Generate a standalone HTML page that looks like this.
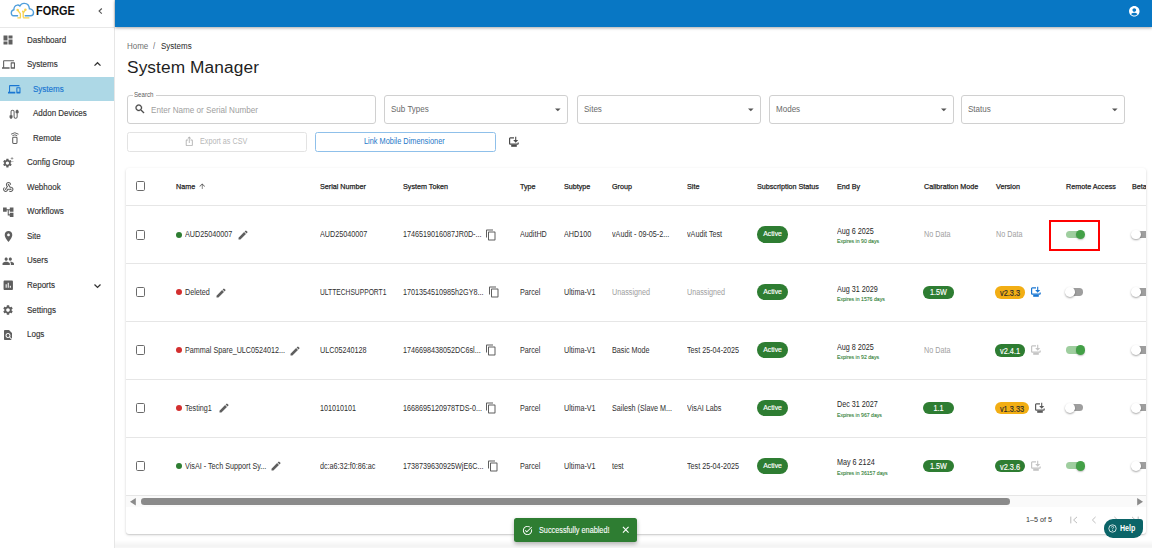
<!DOCTYPE html>
<html><head><meta charset="utf-8">
<style>
*{margin:0;padding:0;box-sizing:border-box}
html,body{width:1152px;height:548px;overflow:hidden;background:#fff;font-family:"Liberation Sans",sans-serif;position:relative}
.a{position:absolute}
.t{position:absolute;white-space:nowrap;line-height:1}
svg{position:absolute;overflow:visible}
/* sidebar */
#side{left:0;top:0;width:115px;height:548px;border-right:1px solid #e6e6e6;background:#fff}
.sn{font-size:9.2px;color:#333;left:27px;transform:scaleX(.87);transform-origin:0 0;-webkit-text-stroke-width:0.15px}
.ss{left:33px}
.ic{fill:#5f5f5f}
/* top bar */
#top{left:115px;top:0;width:1037px;height:27px;background:#0877c4;box-shadow:0 1px 3px rgba(0,0,0,.35)}
</style></head><body>

<!-- SIDEBAR -->
<div id="side" class="a">
  <div class="a" style="left:0;top:27px;width:114px;height:1px;background:#e8e8e8"></div>
  <!-- logo -->
  <svg style="left:0;top:0" width="40" height="22" viewBox="0 0 40 22">
    <path d="M18.1 15.8 H13.5 C12 15.8 11.2 14.2 11.3 12.8 C11.4 11.3 12.4 10 13.9 9.7 C13.8 7.6 15.2 5.4 17.2 5.1 C18.3 4.9 19.3 5.4 19.9 6 C20.8 4.3 22.5 3.3 24.3 3.4 C27.2 3.5 29.2 5.8 29.4 8.8 C31.6 8.9 33.5 10.6 33.5 12.7 C33.5 14.5 32.3 15.8 30.6 15.8 H24.7" fill="none" stroke="#4f9edb" stroke-width="1.4"/>
    <path d="M20.4 17.6 V13.8 L17.7 10.1 M23.2 17.6 V12.6 L22.8 11.4 M23.2 13.2 L25.4 10 M17.4 17.8 H20.9 M23.2 17.9 H29.4" fill="none" stroke="#f6d24d" stroke-width="1.3"/>
    <circle cx="17.6" cy="9.9" r="1.25" fill="#f6d24d"/><circle cx="25.4" cy="9.8" r="1.25" fill="#f6d24d"/><circle cx="22.8" cy="11.3" r="0.9" fill="#f6d24d"/>
  </svg>
  <div class="t" style="left:36px;top:5.1px;font-size:12.7px;font-weight:bold;color:#111;transform:scaleX(.86);transform-origin:0 0">FORGE</div>
  <svg style="left:97px;top:7px" width="7" height="8" viewBox="0 0 7 8"><path d="M4.8 1.5 L2.1 4.1 L4.8 6.7" fill="none" stroke="#555" stroke-width="1.15"/></svg>

  <!-- Dashboard -->
  <svg style="left:2px;top:33.6px" width="12" height="12" viewBox="0 0 24 24"><path class="ic" d="M3 13h8V3H3zm0 8h8v-6H3zm10 0h8V11h-8zm0-18v6h8V3z"/></svg>
  <div class="t sn" style="top:36.21px">Dashboard</div>
  <!-- Systems -->
  <svg style="left:2.2px;top:57.7px" width="13" height="13" viewBox="0 0 24 24"><path class="ic" d="M4 6h18V4H4c-1.1 0-2 .9-2 2v11H0v3h14v-3H4zm19 2h-6c-.55 0-1 .45-1 1v10c0 .55.45 1 1 1h6c.55 0 1-.45 1-1V9c0-.55-.45-1-1-1m-1 9h-4v-7h4z"/></svg>
  <div class="t sn" style="top:60.21px">Systems</div>
  <svg style="left:93px;top:61px" width="9" height="6" viewBox="0 0 9 6"><path d="M1.5 4.6 L4.5 1.7 L7.5 4.6" fill="none" stroke="#333" stroke-width="1.3"/></svg>
  <!-- selected -->
  <div class="a" style="left:0;top:77px;width:114px;height:24px;background:#add8e6"></div>
  <svg style="left:8.3px;top:82.6px" width="12.5" height="12.5" viewBox="0 0 24 24"><path fill="#1976d2" d="M4 6h18V4H4c-1.1 0-2 .9-2 2v11H0v3h14v-3H4zm19 2h-6c-.55 0-1 .45-1 1v10c0 .55.45 1 1 1h6c.55 0 1-.45 1-1V9c0-.55-.45-1-1-1m-1 9h-4v-7h4z"/></svg>
  <div class="t sn ss" style="top:85.21px;color:#1976d2">Systems</div>
  <!-- Addon -->
  <svg style="left:8.3px;top:107.5px" width="12.2" height="12.5" viewBox="0 0 24 24"><path class="ic" d="M20 5V4c0-.55-.45-1-1-1h-2c-.55 0-1 .45-1 1v1h-1v4c0 .55.45 1 1 1h1v7c0 1.1-.9 2-2 2s-2-.9-2-2V7c0-2.21-1.79-4-4-4S5 4.79 5 7v7H4c-.55 0-1 .45-1 1v4h1v1c0 .55.45 1 1 1h2c.55 0 1-.45 1-1v-1h1v-4c0-.55-.45-1-1-1H7V7c0-1.1.9-2 2-2s2 .9 2 2v10c0 2.21 1.79 4 4 4s4-1.79 4-4v-7h1c.55 0 1-.45 1-1V5z"/></svg>
  <div class="t sn ss" style="top:109.21px">Addon Devices</div>
  <!-- Remote -->
  <svg style="left:9px;top:131px" width="12" height="14" viewBox="0 0 12 14"><path d="M2.1 3.2 Q5.8 0.3 9.5 3.2 M3.4 4.7 Q5.8 3 8.2 4.7" fill="none" stroke="#5f5f5f" stroke-width="0.95"/><rect x="3.7" y="6.2" width="4.3" height="6.3" rx="0.9" fill="none" stroke="#5f5f5f" stroke-width="1.05"/></svg>
  <div class="t sn ss" style="top:134.21px">Remote</div>
  <!-- Config Group -->
  <svg style="left:2px;top:156px" width="13" height="13" viewBox="0 0 24 24"><path class="ic" d="M15.95 10.78c.03-.25.05-.51.05-.78s-.02-.53-.06-.78l1.69-1.32c.15-.12.19-.34.1-.51l-1.6-2.77c-.1-.18-.31-.24-.49-.18l-1.99.8c-.42-.32-.86-.58-1.35-.78L12 2.34c-.03-.2-.2-.34-.4-.34H8.4c-.2 0-.36.14-.39.34l-.3 2.12c-.49.2-.94.47-1.35.78l-1.99-.8c-.18-.07-.39 0-.49.18l-1.6 2.77c-.1.18-.06.39.1.51l1.69 1.32c-.04.25-.07.52-.07.78s.02.53.06.78L2.37 12.1c-.15.12-.19.34-.1.51l1.6 2.77c.1.18.31.24.49.18l1.99-.8c.42.32.86.58 1.35.78l.3 2.12c.04.2.2.34.4.34h3.2c.2 0 .37-.14.39-.34l.3-2.12c.49-.2.94-.47 1.35-.78l1.99.8c.18.07.39 0 .49-.18l1.6-2.77c.1-.18.06-.39-.1-.51zM10 13c-1.65 0-3-1.35-3-3s1.35-3 3-3 3 1.35 3 3-1.35 3-3 3" transform="translate(0,3)"/><path class="ic" d="M21 4h-2V2h-1v2h-2v1h2v2h1V5h2zM21 10h-2v1h2z"/></svg>
  <div class="t sn" style="top:158.21px">Config Group</div>
  <!-- Webhook -->
  <svg style="left:1.9px;top:180.5px" width="12.5" height="12.5" viewBox="0 0 24 24"><path class="ic" d="M10 15h5.88c.27-.31.67-.5 1.12-.5.83 0 1.5.67 1.5 1.5s-.67 1.5-1.5 1.5c-.44 0-.84-.19-1.12-.5H11.9c-.46 2.28-2.48 4-4.9 4-2.76 0-5-2.24-5-5 0-2.06 1.25-3.83 3.02-4.6v2.14C4.4 13.98 4 14.95 4 16c0 1.65 1.35 3 3 3s3-1.35 3-3zm2.5-11c1.65 0 3 1.35 3 3h2c0-2.76-2.24-5-5-5s-5 2.24-5 5c0 1.43.6 2.71 1.55 3.62l-2.35 3.9C6.02 14.66 5.5 15.27 5.5 16c0 .83.67 1.5 1.5 1.5s1.5-.67 1.5-1.5c0-.16-.02-.31-.07-.45l3.38-5.63C10.49 9.61 9.5 8.42 9.5 7c0-1.65 1.35-3 3-3m4.5 9c-.64 0-1.23.2-1.72.54l-3.05-5.07C11.53 8.35 11 7.74 11 7c0-.83.67-1.5 1.5-1.5S14 6.17 14 7c0 .15-.02.29-.06.43l2.19 3.65c.28-.05.57-.08.87-.08 2.76 0 5 2.24 5 5s-2.24 5-5 5c-1.85 0-3.47-1.01-4.33-2.5h2.67c.48.32 1.05.5 1.66.5 1.65 0 3-1.35 3-3s-1.35-3-3-3"/></svg>
  <div class="t sn" style="top:183.21px">Webhook</div>
  <!-- Workflows -->
  <svg style="left:2.3px;top:205.6px" width="12.5" height="12.5" viewBox="0 0 24 24"><path class="ic" d="M22 11V3h-7v3H9V3H2v8h7V8h2v10h4v3h7v-8h-7v3h-2V8h2v3z"/></svg>
  <div class="t sn" style="top:207.21px">Workflows</div>
  <!-- Site -->
  <svg style="left:2px;top:230.2px" width="13" height="13" viewBox="0 0 24 24"><path class="ic" d="M12 2C8.13 2 5 5.13 5 9c0 5.25 7 13 7 13s7-7.75 7-13c0-3.87-3.13-7-7-7m0 9.5c-1.38 0-2.5-1.12-2.5-2.5s1.12-2.5 2.5-2.5 2.5 1.12 2.5 2.5-1.12 2.5-2.5 2.5"/></svg>
  <div class="t sn" style="top:232.21px">Site</div>
  <!-- Users -->
  <svg style="left:2.2px;top:254.8px" width="12.5" height="12.5" viewBox="0 0 24 24"><path class="ic" d="M16 11c1.66 0 2.99-1.34 2.99-3S17.66 5 16 5s-3 1.34-3 3 1.34 3 3 3m-8 0c1.66 0 2.99-1.34 2.99-3S9.66 5 8 5 5 6.34 5 8s1.34 3 3 3m0 2c-2.33 0-7 1.17-7 3.5V19h14v-2.5c0-2.33-4.67-3.5-7-3.5m8 0c-.29 0-.62.02-.97.05 1.16.84 1.97 1.97 1.97 3.45V19h6v-2.5c0-2.33-4.67-3.5-7-3.5"/></svg>
  <div class="t sn" style="top:256.21px">Users</div>
  <!-- Reports -->
  <svg style="left:2.3px;top:279.2px" width="12.5" height="12.5" viewBox="0 0 24 24"><path class="ic" d="M19 3H5c-1.1 0-2 .9-2 2v14c0 1.1.9 2 2 2h14c1.1 0 2-.9 2-2V5c0-1.1-.9-2-2-2M9 17H7v-7h2zm4 0h-2V7h2zm4 0h-2v-4h2z"/></svg>
  <div class="t sn" style="top:281.21px">Reports</div>
  <svg style="left:93px;top:283px" width="9" height="6" viewBox="0 0 9 6"><path d="M1.5 1.5 L4.5 4.4 L7.5 1.5" fill="none" stroke="#333" stroke-width="1.3"/></svg>
  <!-- Settings -->
  <svg style="left:2.4px;top:303.9px" width="12" height="12" viewBox="0 0 24 24"><path class="ic" d="M19.14 12.94c.04-.3.06-.61.06-.94 0-.32-.02-.64-.07-.94l2.03-1.58c.18-.14.23-.41.12-.61l-1.92-3.32c-.12-.22-.37-.29-.59-.22l-2.39.96c-.5-.38-1.03-.7-1.62-.94l-.36-2.54c-.04-.24-.24-.41-.48-.41h-3.84c-.24 0-.43.17-.47.41l-.36 2.54c-.59.24-1.13.57-1.62.94l-2.39-.96c-.22-.08-.47 0-.59.22L2.74 8.87c-.12.21-.08.47.12.61l2.03 1.58c-.05.3-.09.63-.09.94s.02.64.07.94l-2.03 1.58c-.18.14-.23.41-.12.61l1.92 3.32c.12.22.37.29.59.22l2.39-.96c.5.38 1.03.7 1.62.94l.36 2.54c.05.24.24.41.48.41h3.84c.24 0 .44-.17.47-.41l.36-2.54c.59-.24 1.13-.56 1.62-.94l2.39.96c.22.08.47 0 .59-.22l1.92-3.32c.12-.22.07-.47-.12-.61zM12 15.6c-1.98 0-3.6-1.62-3.6-3.6s1.62-3.6 3.6-3.6 3.6 1.62 3.6 3.6-1.62 3.6-3.6 3.6"/></svg>
  <div class="t sn" style="top:306.21px">Settings</div>
  <!-- Logs -->
  <svg style="left:2.4px;top:328.6px" width="12" height="12" viewBox="0 0 24 24"><path class="ic" d="M20 19.59V8l-6-6H6c-1.1 0-1.99.9-1.99 2L4 20c0 1.1.89 2 1.99 2H18c.45 0 .85-.15 1.19-.4l-4.43-4.43c-.8.52-1.74.83-2.76.83-2.76 0-5-2.24-5-5s2.24-5 5-5 5 2.24 5 5c0 1.02-.31 1.96-.83 2.75zM9 13c0 1.66 1.34 3 3 3s3-1.34 3-3-1.34-3-3-3-3 1.34-3 3"/></svg>
  <div class="t sn" style="top:330.21px">Logs</div>
</div>

<!-- TOP BAR -->
<div id="top" class="a"></div>
<svg style="left:1127.9px;top:4.9px" width="12.6" height="12.6" viewBox="0 0 24 24"><path fill="#fff" d="M12 2C6.48 2 2 6.48 2 12s4.48 10 10 10 10-4.48 10-10S17.52 2 12 2M12 6c1.93 0 3.5 1.57 3.5 3.5S13.93 13 12 13s-3.5-1.57-3.5-3.5S10.07 6 12 6m0 14c-2.03 0-4.43-.82-6.14-2.88C7.55 15.8 9.68 15 12 15s4.45.8 6.14 2.12C16.43 19.18 14.03 20 12 20"/></svg>

<!--CONTENT-->
<div class="t " style="left:127.20px;top:42.25px;font-size:8.5px;color:#6f6f6f;transform:scaleX(0.94);transform-origin:0 0;">Home</div>
<div class="t " style="left:153.00px;top:42.25px;font-size:8.5px;color:#6f6f6f;transform:scaleX(0.94);transform-origin:0 0;">/</div>
<div class="t " style="left:160.60px;top:42.25px;font-size:8.5px;color:#262626;transform:scaleX(0.94);transform-origin:0 0;">Systems</div>
<div class="t " style="left:127.00px;top:59.46px;font-size:17.3px;color:#1f1f1f;letter-spacing:0.1px">System Manager</div>
<div class="a" style="left:127px;top:95px;width:249px;height:29px;border:1px solid #d0d0d0;border-radius:3px"></div>
<div class="a" style="left:132.5px;top:93px;width:23px;height:4px;background:#fff"></div>
<div class="t " style="left:134.30px;top:91.98px;font-size:6.8px;color:#606060;transform:scaleX(0.9);transform-origin:0 0;">Search</div>
<svg style="left:133.8px;top:103.2px" width="12" height="12" viewBox="0 0 24 24"><path fill="#454545" stroke="#454545" stroke-width="0.6" d="M15.5 14h-.79l-.28-.27C15.41 12.59 16 11.11 16 9.5 16 5.91 13.09 3 9.5 3S3 5.91 3 9.5 5.91 16 9.5 16c1.61 0 3.09-.59 4.23-1.57l.27.28v.79l5 4.99L20.49 19zm-6 0C7.01 14 5 11.99 5 9.5S7.01 5 9.5 5 14 7.01 14 9.5 11.99 14 9.5 14"/></svg>
<div class="t " style="left:150.60px;top:105.50px;font-size:8.6px;color:#a0a0a0;transform:scaleX(0.945);transform-origin:0 0;">Enter Name or Serial Number</div>
<div class="a" style="left:384px;top:95px;width:184px;height:29px;border:1px solid #d0d0d0;border-radius:3px"></div>
<div class="t " style="left:391.00px;top:105.30px;font-size:8.6px;color:#6a6a6a;transform:scaleX(0.935);transform-origin:0 0;">Sub Types</div>
<svg style="left:554px;top:106.8px" width="8" height="6" viewBox="0 0 8 6"><path d="M1 1.5h5.6L3.8 4.3z" fill="#555"/></svg>
<div class="a" style="left:577px;top:95px;width:184px;height:29px;border:1px solid #d0d0d0;border-radius:3px"></div>
<div class="t " style="left:584.00px;top:105.30px;font-size:8.6px;color:#6a6a6a;transform:scaleX(0.935);transform-origin:0 0;">Sites</div>
<svg style="left:747px;top:106.8px" width="8" height="6" viewBox="0 0 8 6"><path d="M1 1.5h5.6L3.8 4.3z" fill="#555"/></svg>
<div class="a" style="left:769px;top:95px;width:185px;height:29px;border:1px solid #d0d0d0;border-radius:3px"></div>
<div class="t " style="left:776.00px;top:105.30px;font-size:8.6px;color:#6a6a6a;transform:scaleX(0.935);transform-origin:0 0;">Modes</div>
<svg style="left:940px;top:106.8px" width="8" height="6" viewBox="0 0 8 6"><path d="M1 1.5h5.6L3.8 4.3z" fill="#555"/></svg>
<div class="a" style="left:961px;top:95px;width:164px;height:29px;border:1px solid #d0d0d0;border-radius:3px"></div>
<div class="t " style="left:968.00px;top:105.30px;font-size:8.6px;color:#6a6a6a;transform:scaleX(0.935);transform-origin:0 0;">Status</div>
<svg style="left:1111px;top:106.8px" width="8" height="6" viewBox="0 0 8 6"><path d="M1 1.5h5.6L3.8 4.3z" fill="#555"/></svg>
<div class="a" style="left:127.1px;top:132.3px;width:180.2px;height:20px;border:1px solid #e3e3e3;border-radius:2.5px"></div>
<svg style="left:183.6px;top:136px" width="10.5" height="10.5" viewBox="0 0 24 24"><path fill="#b0b0b0" d="M16 5l-1.42 1.42-1.59-1.59V16h-1.98V4.83L9.42 6.42 8 5l4-4zm4 5v11c0 1.1-.9 2-2 2H6c-1.11 0-2-.9-2-2V10c0-1.11.89-2 2-2h3v2H6v11h12V10h-3V8h3c1.1 0 2 .89 2 2"/></svg>
<div class="t " style="left:199.70px;top:138.10px;font-size:8.2px;color:#b8b8b8;transform:scaleX(0.88);transform-origin:0 0;">Export as CSV</div>
<div class="a" style="left:315.3px;top:132.2px;width:180.3px;height:20.2px;border:1px solid #8fc0ea;border-radius:2.5px"></div>
<div class="t " style="left:363.90px;top:138.00px;font-size:8.2px;color:#1f78c8;transform:scaleX(0.9);transform-origin:0 0;">Link Mobile Dimensioner</div>
<svg style="left:507.6px;top:135.9px;color:#4a4a4a" width="12" height="12" viewBox="0 0 12 12"><path d="M6 1.9 H2.3 Q1.6 1.9 1.6 2.6 V7.4 Q1.6 8.1 2.3 8.1 H9.5 Q10.2 8.1 10.2 7.4 V6.6" fill="none" stroke="currentColor" stroke-width="1.2"/><path d="M7.7 0.7 V5" fill="none" stroke="currentColor" stroke-width="1.1"/><path d="M5.2 4 H10.2 L7.7 6.8 z" fill="currentColor"/><rect x="3.2" y="8.7" width="5.6" height="2.1" fill="currentColor"/></svg>
<div class="a" style="left:126.3px;top:167.6px;width:1020.2px;height:366.4px;border-radius:3px;box-shadow:0 1px 3px rgba(0,0,0,.16),0 1px 1px rgba(0,0,0,.08);background:#fff"></div>
<div class="a" id="tbl" style="left:126.3px;top:167.6px;width:1020.2px;height:366.4px;overflow:hidden;border-radius:3px">
<div class="a" style="left:0.00px;top:37.40px;width:1020.2px;height:1px;background:#e6e6e6"></div>
<div class="a" style="left:0.00px;top:95.40px;width:1020.2px;height:1px;background:#e6e6e6"></div>
<div class="a" style="left:0.00px;top:153.40px;width:1020.2px;height:1px;background:#e6e6e6"></div>
<div class="a" style="left:0.00px;top:211.40px;width:1020.2px;height:1px;background:#e6e6e6"></div>
<div class="a" style="left:0.00px;top:269.40px;width:1020.2px;height:1px;background:#e6e6e6"></div>
<div class="a" style="left:0.00px;top:327.40px;width:1020.2px;height:1px;background:#e6e6e6"></div>
<div class="a" style="left:9.30px;top:13.60px;width:9.8px;height:9.8px;border:1.4px solid #6b6b6b;border-radius:1.6px"></div>
<div class="t " style="left:49.50px;top:15.24px;font-size:7.9px;color:#212121;transform:scaleX(0.91);transform-origin:0 0;font-weight:normal;-webkit-text-stroke:0.25px #222">Name</div>
<div class="t " style="left:194.00px;top:15.24px;font-size:7.9px;color:#212121;transform:scaleX(0.91);transform-origin:0 0;font-weight:normal;-webkit-text-stroke:0.25px #222">Serial Number</div>
<div class="t " style="left:277.10px;top:15.24px;font-size:7.9px;color:#212121;transform:scaleX(0.91);transform-origin:0 0;font-weight:normal;-webkit-text-stroke:0.25px #222">System Token</div>
<div class="t " style="left:394.00px;top:15.24px;font-size:7.9px;color:#212121;transform:scaleX(0.91);transform-origin:0 0;font-weight:normal;-webkit-text-stroke:0.25px #222">Type</div>
<div class="t " style="left:437.40px;top:15.24px;font-size:7.9px;color:#212121;transform:scaleX(0.91);transform-origin:0 0;font-weight:normal;-webkit-text-stroke:0.25px #222">Subtype</div>
<div class="t " style="left:485.40px;top:15.24px;font-size:7.9px;color:#212121;transform:scaleX(0.91);transform-origin:0 0;font-weight:normal;-webkit-text-stroke:0.25px #222">Group</div>
<div class="t " style="left:561.10px;top:15.24px;font-size:7.9px;color:#212121;transform:scaleX(0.91);transform-origin:0 0;font-weight:normal;-webkit-text-stroke:0.25px #222">Site</div>
<div class="t " style="left:630.50px;top:15.24px;font-size:7.9px;color:#212121;transform:scaleX(0.91);transform-origin:0 0;font-weight:normal;-webkit-text-stroke:0.25px #222">Subscription Status</div>
<div class="t " style="left:710.70px;top:15.24px;font-size:7.9px;color:#212121;transform:scaleX(0.91);transform-origin:0 0;font-weight:normal;-webkit-text-stroke:0.25px #222">End By</div>
<div class="t " style="left:797.70px;top:15.24px;font-size:7.9px;color:#212121;transform:scaleX(0.91);transform-origin:0 0;font-weight:normal;-webkit-text-stroke:0.25px #222">Calibration Mode</div>
<div class="t " style="left:869.40px;top:15.24px;font-size:7.9px;color:#212121;transform:scaleX(0.91);transform-origin:0 0;font-weight:normal;-webkit-text-stroke:0.25px #222">Version</div>
<div class="t " style="left:939.50px;top:15.24px;font-size:7.9px;color:#212121;transform:scaleX(0.91);transform-origin:0 0;font-weight:normal;-webkit-text-stroke:0.25px #222">Remote Access</div>
<div class="t " style="left:1006.20px;top:15.24px;font-size:7.9px;color:#212121;transform:scaleX(0.91);transform-origin:0 0;font-weight:normal;-webkit-text-stroke:0.25px #222">Beta</div>
<svg style="left:71.30px;top:14.20px" width="8.4" height="8.4" viewBox="0 0 24 24" fill="#555"><path d="M4 12l1.41 1.41L11 7.83V20h2V7.83l5.58 5.59L20 12l-8-8z"/></svg>
<div class="a" style="left:9.30px;top:62.20px;width:9.8px;height:9.8px;border:1.4px solid #6b6b6b;border-radius:1.6px"></div>
<div class="a" style="left:49.50px;top:64.00px;width:6px;height:6px;background:#2e7d32;border-radius:50%"></div>
<div class="t " style="left:59.20px;top:62.90px;font-size:8.4px;color:#303030;transform:scaleX(0.86);transform-origin:0 0;">AUD25040007</div>
<svg style="left:111.20px;top:61.60px" width="12.1" height="12.1" viewBox="0 0 24 24" fill="#5f5f5f"><path d="M3 17.25V21h3.75L17.81 9.94l-3.75-3.75zM20.71 7.04c.39-.39.39-1.02 0-1.41l-2.34-2.34a.996.996 0 0 0-1.41 0l-1.83 1.83 3.75 3.75z"/></svg>
<div class="t " style="left:194.00px;top:62.90px;font-size:8.4px;color:#303030;transform:scaleX(0.86);transform-origin:0 0;">AUD25040007</div>
<div class="t " style="left:277.10px;top:62.90px;font-size:8.4px;color:#303030;transform:scaleX(0.86);transform-origin:0 0;">1746519016087JR0D-...</div>
<svg style="left:358.90px;top:61.00px" width="12" height="12" viewBox="0 0 24 24" fill="#5f5f5f"><path d="M16 1H4c-1.1 0-2 .9-2 2v14h2V3h12zm3 4H8c-1.1 0-2 .9-2 2v14c0 1.1.9 2 2 2h11c1.1 0 2-.9 2-2V7c0-1.1-.9-2-2-2m0 16H8V7h11z"/></svg>
<div class="t " style="left:394.00px;top:62.90px;font-size:8.4px;color:#303030;transform:scaleX(0.86);transform-origin:0 0;">AuditHD</div>
<div class="t " style="left:437.40px;top:62.90px;font-size:8.4px;color:#303030;transform:scaleX(0.86);transform-origin:0 0;">AHD100</div>
<div class="t " style="left:485.40px;top:62.90px;font-size:8.4px;color:#303030;transform:scaleX(0.86);transform-origin:0 0;">vAudit - 09-05-2...</div>
<div class="t " style="left:561.10px;top:62.90px;font-size:8.4px;color:#303030;transform:scaleX(0.86);transform-origin:0 0;">vAudit Test</div>
<div class="a" style="left:630.50px;top:58.85px;width:31.5px;height:16.3px;background:#2e7d32;border-radius:8.15px"></div>
<div class="t" style="left:630.50px;top:63.83px;width:31.5px;text-align:center;font-size:6.9px;color:#fff;-webkit-text-stroke:0.15px #fff;transform:scaleX(1.0);transform-origin:50% 0">Active</div>
<div class="t " style="left:710.70px;top:59.50px;font-size:8.4px;color:#262626;transform:scaleX(0.86);transform-origin:0 0;">Aug 6 2025</div>
<div class="t " style="left:710.70px;top:71.87px;font-size:5.6px;color:#2e7d32;transform:scaleX(0.92);transform-origin:0 0;-webkit-text-stroke:0.1px #2e7d32">Expires in 90 days</div>
<div class="t " style="left:797.70px;top:62.90px;font-size:8.4px;color:#a0a0a0;transform:scaleX(0.86);transform-origin:0 0;">No Data</div>
<div class="t " style="left:869.40px;top:62.90px;font-size:8.4px;color:#a0a0a0;transform:scaleX(0.86);transform-origin:0 0;">No Data</div>
<div class="a" style="left:940.00px;top:63.30px;width:17px;height:7.4px;background:#9fce9f;border-radius:3.7px"></div>
<div class="a" style="left:949.60px;top:62.20px;width:9.6px;height:9.6px;background:#43a047;border-radius:50%;box-shadow:0 1px 1.5px rgba(0,0,0,.25)"></div>
<div class="a" style="left:1005.90px;top:63.30px;width:17px;height:7.4px;background:#9e9e9e;border-radius:3.7px"></div>
<div class="a" style="left:1004.90px;top:62.20px;width:9.6px;height:9.6px;background:#fff;border-radius:50%;box-shadow:0 1px 2px rgba(0,0,0,.35)"></div>
<div class="a" style="left:922.70px;top:52.50px;width:50.9px;height:30.6px;border:2px solid #f00"></div>
<div class="a" style="left:9.30px;top:119.80px;width:9.8px;height:9.8px;border:1.4px solid #6b6b6b;border-radius:1.6px"></div>
<div class="a" style="left:49.50px;top:121.60px;width:6px;height:6px;background:#d32f2f;border-radius:50%"></div>
<div class="t " style="left:59.20px;top:120.50px;font-size:8.4px;color:#303030;transform:scaleX(0.86);transform-origin:0 0;">Deleted</div>
<svg style="left:89.00px;top:119.20px" width="12.1" height="12.1" viewBox="0 0 24 24" fill="#5f5f5f"><path d="M3 17.25V21h3.75L17.81 9.94l-3.75-3.75zM20.71 7.04c.39-.39.39-1.02 0-1.41l-2.34-2.34a.996.996 0 0 0-1.41 0l-1.83 1.83 3.75 3.75z"/></svg>
<div class="t " style="left:194.00px;top:120.50px;font-size:8.4px;color:#303030;transform:scaleX(0.8);transform-origin:0 0;">ULTTECHSUPPORT1</div>
<div class="t " style="left:277.10px;top:120.50px;font-size:8.4px;color:#303030;transform:scaleX(0.86);transform-origin:0 0;">1701354510985h2GY8...</div>
<svg style="left:361.50px;top:118.60px" width="12" height="12" viewBox="0 0 24 24" fill="#5f5f5f"><path d="M16 1H4c-1.1 0-2 .9-2 2v14h2V3h12zm3 4H8c-1.1 0-2 .9-2 2v14c0 1.1.9 2 2 2h11c1.1 0 2-.9 2-2V7c0-1.1-.9-2-2-2m0 16H8V7h11z"/></svg>
<div class="t " style="left:394.00px;top:120.50px;font-size:8.4px;color:#303030;transform:scaleX(0.86);transform-origin:0 0;">Parcel</div>
<div class="t " style="left:437.40px;top:120.50px;font-size:8.4px;color:#303030;transform:scaleX(0.86);transform-origin:0 0;">Ultima-V1</div>
<div class="t " style="left:485.40px;top:120.50px;font-size:8.4px;color:#9e9e9e;transform:scaleX(0.86);transform-origin:0 0;">Unassigned</div>
<div class="t " style="left:561.10px;top:120.50px;font-size:8.4px;color:#9e9e9e;transform:scaleX(0.86);transform-origin:0 0;">Unassigned</div>
<div class="a" style="left:630.50px;top:116.45px;width:31.5px;height:16.3px;background:#2e7d32;border-radius:8.15px"></div>
<div class="t" style="left:630.50px;top:121.43px;width:31.5px;text-align:center;font-size:6.9px;color:#fff;-webkit-text-stroke:0.15px #fff;transform:scaleX(1.0);transform-origin:50% 0">Active</div>
<div class="t " style="left:710.70px;top:117.10px;font-size:8.4px;color:#262626;transform:scaleX(0.86);transform-origin:0 0;">Aug 31 2029</div>
<div class="t " style="left:710.70px;top:129.47px;font-size:5.6px;color:#2e7d32;transform:scaleX(0.92);transform-origin:0 0;-webkit-text-stroke:0.1px #2e7d32">Expires in 1576 days</div>
<div class="a" style="left:797.10px;top:118.80px;width:31px;height:12.4px;background:#2e7d32;border-radius:6.2px"></div>
<div class="t" style="left:797.10px;top:121.50px;width:31px;text-align:center;font-size:8.2px;color:#fff;-webkit-text-stroke:0.15px #fff;transform:scaleX(0.88);transform-origin:50% 0">1.5W</div>
<div class="a" style="left:869.00px;top:118.80px;width:30px;height:12.4px;background:#f2ae14;border-radius:6.2px"></div>
<div class="t" style="left:869.00px;top:121.40px;width:30px;text-align:center;font-size:8.4px;color:#2b2b2b;-webkit-text-stroke:0.15px #2b2b2b;transform:scaleX(0.88);transform-origin:50% 0">v2.3.3</div>
<svg style="left:903.40px;top:118.80px;color:#1976d2" width="12" height="12" viewBox="0 0 12 12"><path d="M6 1.9 H2.3 Q1.6 1.9 1.6 2.6 V7.4 Q1.6 8.1 2.3 8.1 H9.5 Q10.2 8.1 10.2 7.4 V6.6" fill="none" stroke="currentColor" stroke-width="1.2"/><path d="M7.7 0.7 V5" fill="none" stroke="currentColor" stroke-width="1.1"/><path d="M5.2 4 H10.2 L7.7 6.8 z" fill="currentColor"/><rect x="3.2" y="8.7" width="5.6" height="2.1" fill="currentColor"/></svg>
<div class="a" style="left:940.00px;top:120.90px;width:17px;height:7.4px;background:#9e9e9e;border-radius:3.7px"></div>
<div class="a" style="left:939.00px;top:119.80px;width:9.6px;height:9.6px;background:#fff;border-radius:50%;box-shadow:0 1px 2px rgba(0,0,0,.35)"></div>
<div class="a" style="left:1005.90px;top:120.90px;width:17px;height:7.4px;background:#9e9e9e;border-radius:3.7px"></div>
<div class="a" style="left:1004.90px;top:119.80px;width:9.6px;height:9.6px;background:#fff;border-radius:50%;box-shadow:0 1px 2px rgba(0,0,0,.35)"></div>
<div class="a" style="left:9.30px;top:177.80px;width:9.8px;height:9.8px;border:1.4px solid #6b6b6b;border-radius:1.6px"></div>
<div class="a" style="left:49.50px;top:179.60px;width:6px;height:6px;background:#d32f2f;border-radius:50%"></div>
<div class="t " style="left:59.20px;top:178.50px;font-size:8.4px;color:#303030;transform:scaleX(0.86);transform-origin:0 0;">Pammal Spare_ULC0524012...</div>
<svg style="left:162.30px;top:177.20px" width="12.1" height="12.1" viewBox="0 0 24 24" fill="#5f5f5f"><path d="M3 17.25V21h3.75L17.81 9.94l-3.75-3.75zM20.71 7.04c.39-.39.39-1.02 0-1.41l-2.34-2.34a.996.996 0 0 0-1.41 0l-1.83 1.83 3.75 3.75z"/></svg>
<div class="t " style="left:194.00px;top:178.50px;font-size:8.4px;color:#303030;transform:scaleX(0.86);transform-origin:0 0;">ULC05240128</div>
<div class="t " style="left:277.10px;top:178.50px;font-size:8.4px;color:#303030;transform:scaleX(0.86);transform-origin:0 0;">1746698438052DC6sl...</div>
<svg style="left:358.70px;top:176.60px" width="12" height="12" viewBox="0 0 24 24" fill="#5f5f5f"><path d="M16 1H4c-1.1 0-2 .9-2 2v14h2V3h12zm3 4H8c-1.1 0-2 .9-2 2v14c0 1.1.9 2 2 2h11c1.1 0 2-.9 2-2V7c0-1.1-.9-2-2-2m0 16H8V7h11z"/></svg>
<div class="t " style="left:394.00px;top:178.50px;font-size:8.4px;color:#303030;transform:scaleX(0.86);transform-origin:0 0;">Parcel</div>
<div class="t " style="left:437.40px;top:178.50px;font-size:8.4px;color:#303030;transform:scaleX(0.86);transform-origin:0 0;">Ultima-V1</div>
<div class="t " style="left:485.40px;top:178.50px;font-size:8.4px;color:#303030;transform:scaleX(0.86);transform-origin:0 0;">Basic Mode</div>
<div class="t " style="left:561.10px;top:178.50px;font-size:8.4px;color:#303030;transform:scaleX(0.86);transform-origin:0 0;">Test 25-04-2025</div>
<div class="a" style="left:630.50px;top:174.45px;width:31.5px;height:16.3px;background:#2e7d32;border-radius:8.15px"></div>
<div class="t" style="left:630.50px;top:179.43px;width:31.5px;text-align:center;font-size:6.9px;color:#fff;-webkit-text-stroke:0.15px #fff;transform:scaleX(1.0);transform-origin:50% 0">Active</div>
<div class="t " style="left:710.70px;top:175.10px;font-size:8.4px;color:#262626;transform:scaleX(0.86);transform-origin:0 0;">Aug 8 2025</div>
<div class="t " style="left:710.70px;top:187.47px;font-size:5.6px;color:#2e7d32;transform:scaleX(0.92);transform-origin:0 0;-webkit-text-stroke:0.1px #2e7d32">Expires in 92 days</div>
<div class="t " style="left:797.70px;top:178.50px;font-size:8.4px;color:#a0a0a0;transform:scaleX(0.86);transform-origin:0 0;">No Data</div>
<div class="a" style="left:869.00px;top:176.80px;width:30px;height:12.4px;background:#2e7d32;border-radius:6.2px"></div>
<div class="t" style="left:869.00px;top:179.40px;width:30px;text-align:center;font-size:8.4px;color:#fff;-webkit-text-stroke:0.15px #fff;transform:scaleX(0.88);transform-origin:50% 0">v2.4.1</div>
<svg style="left:903.40px;top:176.80px;color:#c4c4c4" width="12" height="12" viewBox="0 0 12 12"><path d="M6 1.9 H2.3 Q1.6 1.9 1.6 2.6 V7.4 Q1.6 8.1 2.3 8.1 H9.5 Q10.2 8.1 10.2 7.4 V6.6" fill="none" stroke="currentColor" stroke-width="1.2"/><path d="M7.7 0.7 V5" fill="none" stroke="currentColor" stroke-width="1.1"/><path d="M5.2 4 H10.2 L7.7 6.8 z" fill="currentColor"/><rect x="3.2" y="8.7" width="5.6" height="2.1" fill="currentColor"/></svg>
<div class="a" style="left:940.00px;top:178.90px;width:17px;height:7.4px;background:#9fce9f;border-radius:3.7px"></div>
<div class="a" style="left:949.60px;top:177.80px;width:9.6px;height:9.6px;background:#43a047;border-radius:50%;box-shadow:0 1px 1.5px rgba(0,0,0,.25)"></div>
<div class="a" style="left:1005.90px;top:178.90px;width:17px;height:7.4px;background:#9e9e9e;border-radius:3.7px"></div>
<div class="a" style="left:1004.90px;top:177.80px;width:9.6px;height:9.6px;background:#fff;border-radius:50%;box-shadow:0 1px 2px rgba(0,0,0,.35)"></div>
<div class="a" style="left:9.30px;top:235.40px;width:9.8px;height:9.8px;border:1.4px solid #6b6b6b;border-radius:1.6px"></div>
<div class="a" style="left:49.50px;top:237.20px;width:6px;height:6px;background:#d32f2f;border-radius:50%"></div>
<div class="t " style="left:59.20px;top:236.10px;font-size:8.4px;color:#303030;transform:scaleX(0.86);transform-origin:0 0;">Testing1</div>
<svg style="left:92.20px;top:234.80px" width="12.1" height="12.1" viewBox="0 0 24 24" fill="#5f5f5f"><path d="M3 17.25V21h3.75L17.81 9.94l-3.75-3.75zM20.71 7.04c.39-.39.39-1.02 0-1.41l-2.34-2.34a.996.996 0 0 0-1.41 0l-1.83 1.83 3.75 3.75z"/></svg>
<div class="t " style="left:194.00px;top:236.10px;font-size:8.4px;color:#303030;transform:scaleX(0.86);transform-origin:0 0;">101010101</div>
<div class="t " style="left:277.10px;top:236.10px;font-size:8.4px;color:#303030;transform:scaleX(0.86);transform-origin:0 0;">1668695120978TDS-0...</div>
<svg style="left:358.70px;top:234.20px" width="12" height="12" viewBox="0 0 24 24" fill="#5f5f5f"><path d="M16 1H4c-1.1 0-2 .9-2 2v14h2V3h12zm3 4H8c-1.1 0-2 .9-2 2v14c0 1.1.9 2 2 2h11c1.1 0 2-.9 2-2V7c0-1.1-.9-2-2-2m0 16H8V7h11z"/></svg>
<div class="t " style="left:394.00px;top:236.10px;font-size:8.4px;color:#303030;transform:scaleX(0.86);transform-origin:0 0;">Parcel</div>
<div class="t " style="left:437.40px;top:236.10px;font-size:8.4px;color:#303030;transform:scaleX(0.86);transform-origin:0 0;">Ultima-V1</div>
<div class="t " style="left:485.40px;top:236.10px;font-size:8.4px;color:#303030;transform:scaleX(0.86);transform-origin:0 0;">Sailesh (Slave M...</div>
<div class="t " style="left:561.10px;top:236.10px;font-size:8.4px;color:#303030;transform:scaleX(0.86);transform-origin:0 0;">VisAI Labs</div>
<div class="a" style="left:630.50px;top:232.05px;width:31.5px;height:16.3px;background:#2e7d32;border-radius:8.15px"></div>
<div class="t" style="left:630.50px;top:237.03px;width:31.5px;text-align:center;font-size:6.9px;color:#fff;-webkit-text-stroke:0.15px #fff;transform:scaleX(1.0);transform-origin:50% 0">Active</div>
<div class="t " style="left:710.70px;top:232.70px;font-size:8.4px;color:#262626;transform:scaleX(0.86);transform-origin:0 0;">Dec 31 2027</div>
<div class="t " style="left:710.70px;top:245.07px;font-size:5.6px;color:#2e7d32;transform:scaleX(0.92);transform-origin:0 0;-webkit-text-stroke:0.1px #2e7d32">Expires in 967 days</div>
<div class="a" style="left:797.10px;top:234.40px;width:31px;height:12.4px;background:#2e7d32;border-radius:6.2px"></div>
<div class="t" style="left:797.10px;top:237.10px;width:31px;text-align:center;font-size:8.2px;color:#fff;-webkit-text-stroke:0.15px #fff;transform:scaleX(0.88);transform-origin:50% 0">1.1</div>
<div class="a" style="left:869.00px;top:234.40px;width:34px;height:12.4px;background:#f2ae14;border-radius:6.2px"></div>
<div class="t" style="left:869.00px;top:237.00px;width:34px;text-align:center;font-size:8.4px;color:#2b2b2b;-webkit-text-stroke:0.15px #2b2b2b;transform:scaleX(0.88);transform-origin:50% 0">v1.3.33</div>
<svg style="left:907.40px;top:234.40px;color:#5a5a5a" width="12" height="12" viewBox="0 0 12 12"><path d="M6 1.9 H2.3 Q1.6 1.9 1.6 2.6 V7.4 Q1.6 8.1 2.3 8.1 H9.5 Q10.2 8.1 10.2 7.4 V6.6" fill="none" stroke="currentColor" stroke-width="1.2"/><path d="M7.7 0.7 V5" fill="none" stroke="currentColor" stroke-width="1.1"/><path d="M5.2 4 H10.2 L7.7 6.8 z" fill="currentColor"/><rect x="3.2" y="8.7" width="5.6" height="2.1" fill="currentColor"/></svg>
<div class="a" style="left:940.00px;top:236.50px;width:17px;height:7.4px;background:#9e9e9e;border-radius:3.7px"></div>
<div class="a" style="left:939.00px;top:235.40px;width:9.6px;height:9.6px;background:#fff;border-radius:50%;box-shadow:0 1px 2px rgba(0,0,0,.35)"></div>
<div class="a" style="left:1005.90px;top:236.50px;width:17px;height:7.4px;background:#9e9e9e;border-radius:3.7px"></div>
<div class="a" style="left:1004.90px;top:235.40px;width:9.6px;height:9.6px;background:#fff;border-radius:50%;box-shadow:0 1px 2px rgba(0,0,0,.35)"></div>
<div class="a" style="left:9.30px;top:293.40px;width:9.8px;height:9.8px;border:1.4px solid #6b6b6b;border-radius:1.6px"></div>
<div class="a" style="left:49.50px;top:295.20px;width:6px;height:6px;background:#2e7d32;border-radius:50%"></div>
<div class="t " style="left:59.20px;top:294.10px;font-size:8.4px;color:#303030;transform:scaleX(0.86);transform-origin:0 0;">VisAI - Tech Support Sy...</div>
<svg style="left:144.20px;top:292.80px" width="12.1" height="12.1" viewBox="0 0 24 24" fill="#5f5f5f"><path d="M3 17.25V21h3.75L17.81 9.94l-3.75-3.75zM20.71 7.04c.39-.39.39-1.02 0-1.41l-2.34-2.34a.996.996 0 0 0-1.41 0l-1.83 1.83 3.75 3.75z"/></svg>
<div class="t " style="left:194.00px;top:294.10px;font-size:8.4px;color:#303030;transform:scaleX(0.86);transform-origin:0 0;">dc:a6:32:f0:86:ac</div>
<div class="t " style="left:277.10px;top:294.10px;font-size:8.4px;color:#303030;transform:scaleX(0.86);transform-origin:0 0;">1738739630925WjE6C...</div>
<svg style="left:360.90px;top:292.20px" width="12" height="12" viewBox="0 0 24 24" fill="#5f5f5f"><path d="M16 1H4c-1.1 0-2 .9-2 2v14h2V3h12zm3 4H8c-1.1 0-2 .9-2 2v14c0 1.1.9 2 2 2h11c1.1 0 2-.9 2-2V7c0-1.1-.9-2-2-2m0 16H8V7h11z"/></svg>
<div class="t " style="left:394.00px;top:294.10px;font-size:8.4px;color:#303030;transform:scaleX(0.86);transform-origin:0 0;">Parcel</div>
<div class="t " style="left:437.40px;top:294.10px;font-size:8.4px;color:#303030;transform:scaleX(0.86);transform-origin:0 0;">Ultima-V1</div>
<div class="t " style="left:485.40px;top:294.10px;font-size:8.4px;color:#303030;transform:scaleX(0.86);transform-origin:0 0;">test</div>
<div class="t " style="left:561.10px;top:294.10px;font-size:8.4px;color:#303030;transform:scaleX(0.86);transform-origin:0 0;">Test 25-04-2025</div>
<div class="a" style="left:630.50px;top:290.05px;width:31.5px;height:16.3px;background:#2e7d32;border-radius:8.15px"></div>
<div class="t" style="left:630.50px;top:295.03px;width:31.5px;text-align:center;font-size:6.9px;color:#fff;-webkit-text-stroke:0.15px #fff;transform:scaleX(1.0);transform-origin:50% 0">Active</div>
<div class="t " style="left:710.70px;top:290.70px;font-size:8.4px;color:#262626;transform:scaleX(0.86);transform-origin:0 0;">May 6 2124</div>
<div class="t " style="left:710.70px;top:303.07px;font-size:5.6px;color:#2e7d32;transform:scaleX(0.92);transform-origin:0 0;-webkit-text-stroke:0.1px #2e7d32">Expires in 36157 days</div>
<div class="a" style="left:797.10px;top:292.40px;width:31px;height:12.4px;background:#2e7d32;border-radius:6.2px"></div>
<div class="t" style="left:797.10px;top:295.10px;width:31px;text-align:center;font-size:8.2px;color:#fff;-webkit-text-stroke:0.15px #fff;transform:scaleX(0.88);transform-origin:50% 0">1.5W</div>
<div class="a" style="left:869.00px;top:292.40px;width:30px;height:12.4px;background:#2e7d32;border-radius:6.2px"></div>
<div class="t" style="left:869.00px;top:295.00px;width:30px;text-align:center;font-size:8.4px;color:#fff;-webkit-text-stroke:0.15px #fff;transform:scaleX(0.88);transform-origin:50% 0">v2.3.6</div>
<svg style="left:903.40px;top:292.40px;color:#c4c4c4" width="12" height="12" viewBox="0 0 12 12"><path d="M6 1.9 H2.3 Q1.6 1.9 1.6 2.6 V7.4 Q1.6 8.1 2.3 8.1 H9.5 Q10.2 8.1 10.2 7.4 V6.6" fill="none" stroke="currentColor" stroke-width="1.2"/><path d="M7.7 0.7 V5" fill="none" stroke="currentColor" stroke-width="1.1"/><path d="M5.2 4 H10.2 L7.7 6.8 z" fill="currentColor"/><rect x="3.2" y="8.7" width="5.6" height="2.1" fill="currentColor"/></svg>
<div class="a" style="left:940.00px;top:294.50px;width:17px;height:7.4px;background:#9fce9f;border-radius:3.7px"></div>
<div class="a" style="left:949.60px;top:293.40px;width:9.6px;height:9.6px;background:#43a047;border-radius:50%;box-shadow:0 1px 1.5px rgba(0,0,0,.25)"></div>
<div class="a" style="left:1005.90px;top:294.50px;width:17px;height:7.4px;background:#9e9e9e;border-radius:3.7px"></div>
<div class="a" style="left:1004.90px;top:293.40px;width:9.6px;height:9.6px;background:#fff;border-radius:50%;box-shadow:0 1px 2px rgba(0,0,0,.35)"></div>
<div class="a" style="left:0.00px;top:328.10px;width:1020.2px;height:11px;background:#fafafa"></div>
<svg style="left:4.20px;top:330.60px" width="6" height="7.5" viewBox="0 0 6 7.5" fill="#8a8a8a"><path d="M5.8 0 V7.5 L0 3.75z"/></svg>
<svg style="left:1010.90px;top:330.60px" width="6" height="7.5" viewBox="0 0 6 7.5" fill="#8a8a8a"><path d="M0.2 0 V7.5 L6 3.75z"/></svg>
<div class="a" style="left:14.60px;top:330.60px;width:869.6px;height:6.6px;background:#8a8a8a;border-radius:3.3px"></div>
<div class="t " style="left:900.10px;top:348.90px;font-size:8.0px;color:#333;transform:scaleX(0.9);transform-origin:0 0;">1–5 of 5</div>
<svg style="left:943.90px;top:348.80px" width="8" height="8" viewBox="0 0 8 8" fill="none"><path d="M0.8 0.6 V7.4 M7 0.9 L3.6 4 L7 7.1" fill="none" stroke="#b5b5b5" stroke-width="0.9"/></svg>
<svg style="left:965.10px;top:348.80px" width="6" height="8" viewBox="0 0 6 8" fill="none"><path d="M4.6 0.9 L1.4 4 L4.6 7.1" fill="none" stroke="#b5b5b5" stroke-width="0.9"/></svg>
<svg style="left:986.30px;top:348.80px" width="6" height="8" viewBox="0 0 6 8" fill="none"><path d="M1.4 0.9 L4.6 4 L1.4 7.1" fill="none" stroke="#b5b5b5" stroke-width="0.9"/></svg>
<svg style="left:1005.10px;top:348.80px" width="8" height="8" viewBox="0 0 8 8" fill="none"><path d="M1 0.9 L4.4 4 L1 7.1 M7.2 0.6 V7.4" fill="none" stroke="#b5b5b5" stroke-width="0.9"/></svg>
</div>
<div class="a" style="left:115px;top:540px;width:1037px;height:8px;background:linear-gradient(#fff 0%,#f3f3f3 75%,#f7f7f7 100%)"></div>
<div class="a" style="left:513.9px;top:517.8px;width:123.6px;height:24.4px;background:#2e7d32;border-radius:2.5px;box-shadow:0 2px 4px rgba(0,0,0,.3)"></div>
<svg style="left:521.6px;top:524.5px" width="11" height="11" viewBox="0 0 24 24" fill="#fff"><path d="M22 5.18 10.59 16.6l-4.24-4.24 1.41-1.41 2.83 2.83 10-10zm-2.21 5.04c.13.57.21 1.17.21 1.78 0 4.42-3.58 8-8 8s-8-3.58-8-8 3.58-8 8-8c1.58 0 3.04.46 4.28 1.25l1.44-1.44C16.1 2.67 14.13 2 12 2 6.48 2 2 6.48 2 12s4.48 10 10 10 10-4.48 10-10c0-1.19-.22-2.33-.6-3.39z"/></svg>
<div class="t " style="left:539.20px;top:526.80px;font-size:8.2px;color:#fff;transform:scaleX(0.89);transform-origin:0 0;-webkit-text-stroke:0.1px #fff">Successfully enabled!</div>
<svg style="left:621.6px;top:526.4px" width="7.5" height="7.5" viewBox="0 0 8 8"><path d="M1 1 L7 7 M7 1 L1 7" stroke="#fff" stroke-width="1.2"/></svg>
<div class="a" style="left:1104.2px;top:519px;width:38.9px;height:18.8px;background:#0b6468;border-radius:9px 3px 9px 9px"></div>
<svg style="left:1108.3px;top:524px" width="9" height="9" viewBox="0 0 9 9"><circle cx="4.5" cy="4.5" r="3.7" fill="none" stroke="#e8f2f2" stroke-width="0.85"/><path d="M3.4 3.5 Q3.5 2.4 4.5 2.4 Q5.6 2.4 5.6 3.4 Q5.6 4.1 4.6 4.6 V5.3" fill="none" stroke="#e8f2f2" stroke-width="0.8"/><circle cx="4.6" cy="6.4" r="0.5" fill="#e8f2f2"/></svg>
<div class="t " style="left:1120.40px;top:524.60px;font-size:8.2px;color:#fff;transform:scaleX(0.86);transform-origin:0 0;font-weight:bold">Help</div>

</body></html>
